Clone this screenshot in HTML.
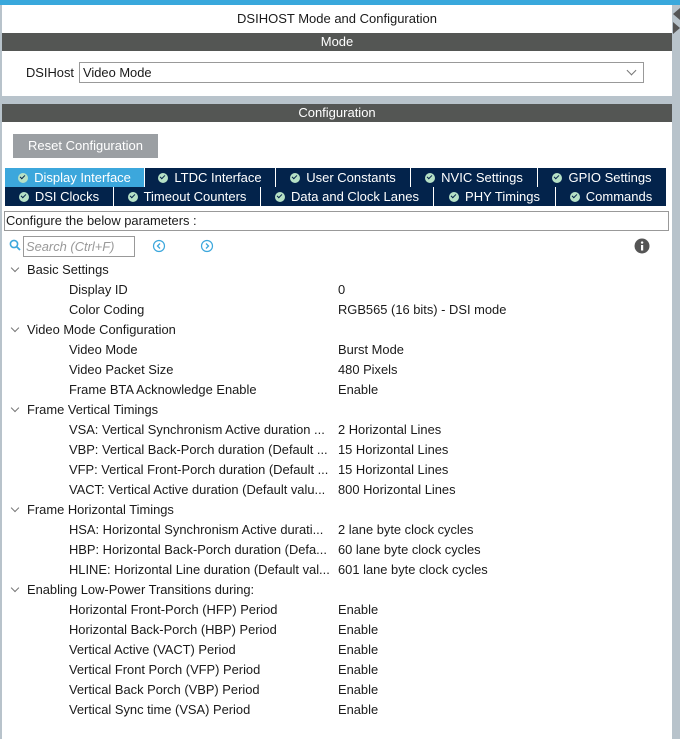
<!DOCTYPE html>
<html><head><meta charset="utf-8"><style>
*{margin:0;padding:0;box-sizing:border-box}
body{width:680px;height:739px;overflow:hidden;background:#fff;font-family:"Liberation Sans",Arial,sans-serif;font-size:12.9px;color:#1a1a1a;position:relative}
.a{position:absolute}
.bar{position:absolute;left:2px;width:670px;background:#545654;color:#fff;text-align:center;font-size:13px}
.tab{position:absolute;height:19px;background:#03234b;color:#fff;font-size:13px;line-height:19px;text-align:center;border-right:1px solid #fff;white-space:nowrap}
.tab i{display:inline-block;width:10px;height:10px;border-radius:50%;background:#b6e1c6;margin-right:6px;vertical-align:-1px;position:relative}
.tab i:after{content:"";position:absolute;left:2px;top:2px;width:4px;height:2px;border-left:1.5px solid #03234b;border-bottom:1.5px solid #03234b;transform:rotate(-45deg)}
.sel{background:#3ca7dc}
.row{position:absolute;left:0;height:20px;line-height:20px;white-space:nowrap}
.cat{left:27px}
.cat:before{content:"";position:absolute;left:-15px;top:5px;width:5px;height:5px;border-right:1px solid #777;border-bottom:1px solid #777;transform:rotate(45deg)}
.it{left:69px}
.v{position:absolute;left:338px;white-space:nowrap;height:20px;line-height:20px}
</style></head><body>
<div class="a" style="left:0;top:0;width:680px;height:5px;background:#39a8dc"></div>
<div class="a" style="left:0;top:5px;width:2px;height:734px;background:#b8c3cb"></div>
<div class="a" style="left:672px;top:5px;width:8px;height:734px;background:#b8c3cb"></div>
<div class="a" style="left:673px;top:8px;width:0;height:0;border-top:6px solid transparent;border-bottom:6px solid transparent;border-right:7px solid #555"></div>
<div class="a" style="left:673px;top:22px;width:0;height:0;border-top:6px solid transparent;border-bottom:6px solid transparent;border-left:7px solid #555"></div>
<div class="a" style="left:2px;top:11px;width:670px;text-align:center;font-size:13px">DSIHOST Mode and Configuration</div>
<div class="bar" style="top:33px;height:18px;line-height:18px">Mode</div>
<div class="a" style="left:26px;top:65px">DSIHost</div>
<div class="a" style="left:79px;top:62px;width:565px;height:21px;border:1px solid #999;line-height:19px;padding-left:3px">Video Mode</div>
<div class="a" style="left:628px;top:67px;width:7px;height:7px;border-right:1px solid #777;border-bottom:1px solid #777;transform:rotate(45deg)"></div>
<div class="a" style="left:2px;top:96px;width:670px;height:8px;background:#b8c3cb"></div>
<div class="bar" style="top:104px;height:18px;line-height:18px">Configuration</div>
<div class="a" style="left:13px;top:134px;width:145px;height:24px;background:#9b9fa3;color:#fff;text-align:center;line-height:24px;font-size:13px">Reset Configuration</div>
<div class="tab sel" style="left:5px;top:168px;width:140px"><i></i>Display Interface</div>
<div class="tab" style="left:145px;top:168px;width:131px"><i></i>LTDC Interface</div>
<div class="tab" style="left:276px;top:168px;width:135px"><i></i>User Constants</div>
<div class="tab" style="left:411px;top:168px;width:127px"><i></i>NVIC Settings</div>
<div class="tab" style="left:538px;top:168px;width:129px"><i></i>GPIO Settings</div>
<div class="tab" style="left:5px;top:187px;width:109px"><i></i>DSI Clocks</div>
<div class="tab" style="left:114px;top:187px;width:147px"><i></i>Timeout Counters</div>
<div class="tab" style="left:261px;top:187px;width:173px"><i></i>Data and Clock Lanes</div>
<div class="tab" style="left:434px;top:187px;width:122px"><i></i>PHY Timings</div>
<div class="tab" style="left:556px;top:187px;width:111px"><i></i>Commands</div>
<div class="a" style="left:4px;top:211px;width:665px;height:20px;border:1px solid #999;line-height:18px;padding-left:1px">Configure the below parameters :</div>
<svg class="a" style="left:9px;top:239px" width="13" height="13"><circle cx="5" cy="5" r="3.6" fill="none" stroke="#3ca7dc" stroke-width="1.6"/><line x1="7.5" y1="7.5" x2="11" y2="11" stroke="#3ca7dc" stroke-width="1.8"/></svg>
<div class="a" style="left:23px;top:236px;width:112px;height:21px;border:1px solid #999;color:#999;font-style:italic;line-height:19px;padding-left:2px">Search (Ctrl+F)</div>
<svg class="a" style="left:152px;top:239px" width="14" height="14"><circle cx="7" cy="7" r="5.5" fill="none" stroke="#3ca7dc" stroke-width="1.2"/><path d="M8 4.5L5.5 7 8 9.5" fill="none" stroke="#3ca7dc" stroke-width="1.3"/></svg>
<svg class="a" style="left:200px;top:239px" width="14" height="14"><circle cx="7" cy="7" r="5.5" fill="none" stroke="#3ca7dc" stroke-width="1.2"/><path d="M6 4.5L8.5 7 6 9.5" fill="none" stroke="#3ca7dc" stroke-width="1.3"/></svg>
<svg class="a" style="left:634px;top:238px" width="16" height="16"><circle cx="8" cy="8" r="7.5" fill="#555"/><rect x="7" y="7" width="2.2" height="5.5" fill="#fff"/><circle cx="8.1" cy="4.6" r="1.2" fill="#fff"/></svg>
<div class="row cat" style="top:260px">Basic Settings</div>
<div class="row it" style="top:280px">Display ID</div><div class="v" style="top:280px">0</div>
<div class="row it" style="top:300px">Color Coding</div><div class="v" style="top:300px">RGB565 (16 bits) - DSI mode</div>
<div class="row cat" style="top:320px">Video Mode Configuration</div>
<div class="row it" style="top:340px">Video Mode</div><div class="v" style="top:340px">Burst Mode</div>
<div class="row it" style="top:360px">Video Packet Size</div><div class="v" style="top:360px">480 Pixels</div>
<div class="row it" style="top:380px">Frame BTA Acknowledge Enable</div><div class="v" style="top:380px">Enable</div>
<div class="row cat" style="top:400px">Frame Vertical Timings</div>
<div class="row it" style="top:420px">VSA: Vertical Synchronism Active duration ...</div><div class="v" style="top:420px">2 Horizontal Lines</div>
<div class="row it" style="top:440px">VBP: Vertical Back-Porch duration (Default ...</div><div class="v" style="top:440px">15 Horizontal Lines</div>
<div class="row it" style="top:460px">VFP: Vertical Front-Porch duration (Default ...</div><div class="v" style="top:460px">15 Horizontal Lines</div>
<div class="row it" style="top:480px">VACT: Vertical Active duration (Default valu...</div><div class="v" style="top:480px">800 Horizontal Lines</div>
<div class="row cat" style="top:500px">Frame Horizontal Timings</div>
<div class="row it" style="top:520px">HSA: Horizontal Synchronism Active durati...</div><div class="v" style="top:520px">2 lane byte clock cycles</div>
<div class="row it" style="top:540px">HBP: Horizontal Back-Porch duration (Defa...</div><div class="v" style="top:540px">60 lane byte clock cycles</div>
<div class="row it" style="top:560px">HLINE: Horizontal Line duration (Default val...</div><div class="v" style="top:560px">601 lane byte clock cycles</div>
<div class="row cat" style="top:580px">Enabling Low-Power Transitions during:</div>
<div class="row it" style="top:600px">Horizontal Front-Porch (HFP) Period</div><div class="v" style="top:600px">Enable</div>
<div class="row it" style="top:620px">Horizontal Back-Porch (HBP) Period</div><div class="v" style="top:620px">Enable</div>
<div class="row it" style="top:640px">Vertical Active (VACT) Period</div><div class="v" style="top:640px">Enable</div>
<div class="row it" style="top:660px">Vertical Front Porch (VFP) Period</div><div class="v" style="top:660px">Enable</div>
<div class="row it" style="top:680px">Vertical Back Porch (VBP) Period</div><div class="v" style="top:680px">Enable</div>
<div class="row it" style="top:700px">Vertical Sync time (VSA) Period</div><div class="v" style="top:700px">Enable</div>
</body></html>
